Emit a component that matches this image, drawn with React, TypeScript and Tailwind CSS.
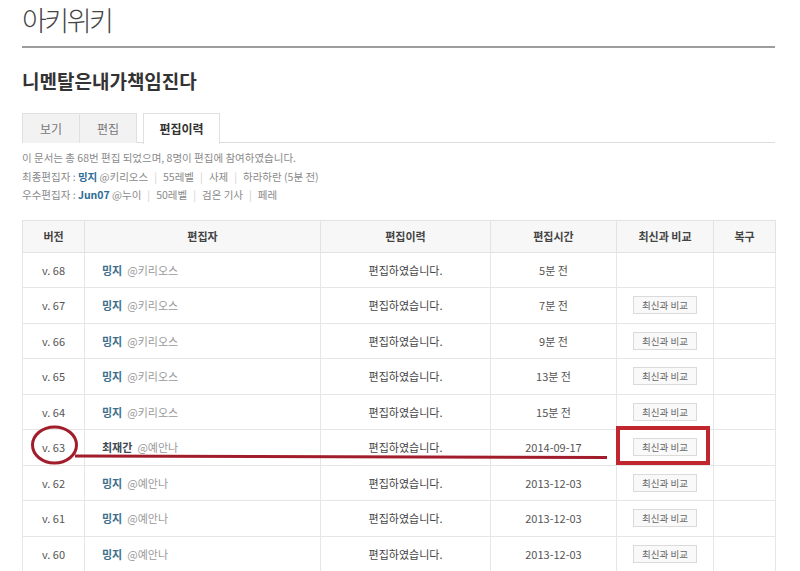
import React from "react";

const rows = [
  { v: "v. 68", name: "밍지", user: "@키리오스", time: "5분 전", btn: false },
  { v: "v. 67", name: "밍지", user: "@키리오스", time: "7분 전", btn: true },
  { v: "v. 66", name: "밍지", user: "@키리오스", time: "9분 전", btn: true },
  { v: "v. 65", name: "밍지", user: "@키리오스", time: "13분 전", btn: true },
  { v: "v. 64", name: "밍지", user: "@키리오스", time: "15분 전", btn: true },
  { v: "v. 63", name: "최재간", user: "@예안나", time: "2014-09-17", btn: true, dark: true },
  { v: "v. 62", name: "밍지", user: "@예안나", time: "2013-12-03", btn: true },
  { v: "v. 61", name: "밍지", user: "@예안나", time: "2013-12-03", btn: true },
  { v: "v. 60", name: "밍지", user: "@예안나", time: "2013-12-03", btn: true },
];

function Sep() {
  return <span className="text-[#cfcfcf] mx-[6px]">|</span>;
}

export default function App() {
  return (
    <div className="relative w-[800px] h-[571px] overflow-hidden bg-white font-['Noto_Sans_CJK_KR',sans-serif] text-[#555]">
      <div className="pl-[22px] w-[775px]">
        <div className="h-[46px] text-[27px] leading-[40px] tracking-[-2.5px] text-[#444] font-light">아키위키</div>
        <div className="h-[2px] bg-[#9d9d9d]" />
        <div className="h-[65px] pt-[21px] text-[19px] leading-[24px] font-bold text-[#333]">니멘탈은내가책임진다</div>
        <div className="flex h-[30px] text-[12px] border-b border-[#dcdcdc]">
          <div className="w-[58px] h-[30px] flex items-center justify-center bg-[#f2f2f2] border border-[#e0e0e0] border-b-0 text-[#777]">보기</div>
          <div className="w-[57px] h-[30px] flex items-center justify-center bg-[#f2f2f2] border border-[#e0e0e0] border-b-0 border-l-0 text-[#777]">편집</div>
          <div className="ml-[6px] w-[77px] h-[31px] flex items-center justify-center bg-white border border-[#e0e0e0] border-b-0 font-bold text-[#333]">편집이력</div>
        </div>
        <div className="pt-[6px] text-[10.5px] leading-[18.5px] text-[#8a8a8a]">
          <div>이 문서는 총 68번 편집 되었으며, 8명이 편집에 참여하였습니다.</div>
          <div>
            최종편집자 : <span className="font-bold text-[#2d6c96]">밍지</span> @키리오스<Sep />55레벨<Sep />사제<Sep />하라하란 (5분 전)
          </div>
          <div>
            우수편집자 : <span className="font-bold text-[#2d6c96]">Jun07</span> @누이<Sep />50레벨<Sep />검은 기사<Sep />페레
          </div>
        </div>
        <table className="mt-[15px] w-[753px] table-fixed border-collapse text-[11px]">
          <colgroup>
            <col className="w-[62px]" />
            <col className="w-[236px]" />
            <col className="w-[170px]" />
            <col className="w-[126px]" />
            <col className="w-[97px]" />
            <col className="w-[62px]" />
          </colgroup>
          <thead>
            <tr className="h-[32px] bg-[#f7f7f7] text-[#444] font-bold">
              <th className="border border-[#e3e3e3] font-bold">버전</th>
              <th className="border border-[#e3e3e3] font-bold">편집자</th>
              <th className="border border-[#e3e3e3] font-bold">편집이력</th>
              <th className="border border-[#e3e3e3] font-bold">편집시간</th>
              <th className="border border-[#e3e3e3] font-bold">최신과 비교</th>
              <th className="border border-[#e3e3e3] font-bold">복구</th>
            </tr>
          </thead>
          <tbody>
            {rows.map((r) => (
              <tr key={r.v} className="h-[35.5px]">
                <td className="border border-[#e6e6e6] text-center text-[#555]">{r.v}</td>
                <td className="border border-[#e6e6e6] pl-[17px]">
                  <span className={r.dark ? "font-bold text-[#3b4a52]" : "font-bold text-[#3c6f8c]"}>{r.name}</span>
                  <span className="ml-[5px] text-[#999]">{r.user}</span>
                </td>
                <td className="border border-[#e6e6e6] text-center text-[#444]">편집하였습니다.</td>
                <td className="border border-[#e6e6e6] text-center text-[#555]">{r.time}</td>
                <td className="border border-[#e6e6e6] text-center">
                  {r.btn && (
                    <span className="inline-flex items-center justify-center w-[64px] h-[18px] border border-[#dadada] bg-[#f9f9f9] text-[9.5px] text-[#666]">
                      최신과 비교
                    </span>
                  )}
                </td>
                <td className="border border-[#e6e6e6]" />
              </tr>
            ))}
          </tbody>
        </table>
      </div>
      <svg className="absolute left-0 top-0 pointer-events-none" width="800" height="571" viewBox="0 0 800 571">
        <ellipse cx="54.5" cy="445" rx="22" ry="18" fill="none" stroke="#a11d2b" strokeWidth="3" />
        <path d="M75 456 L607 457.5" fill="none" stroke="#a11d2b" strokeWidth="3" />
        <rect x="618" y="428" width="90" height="35" fill="none" stroke="#c0262e" strokeWidth="4" />
      </svg>
    </div>
  );
}
